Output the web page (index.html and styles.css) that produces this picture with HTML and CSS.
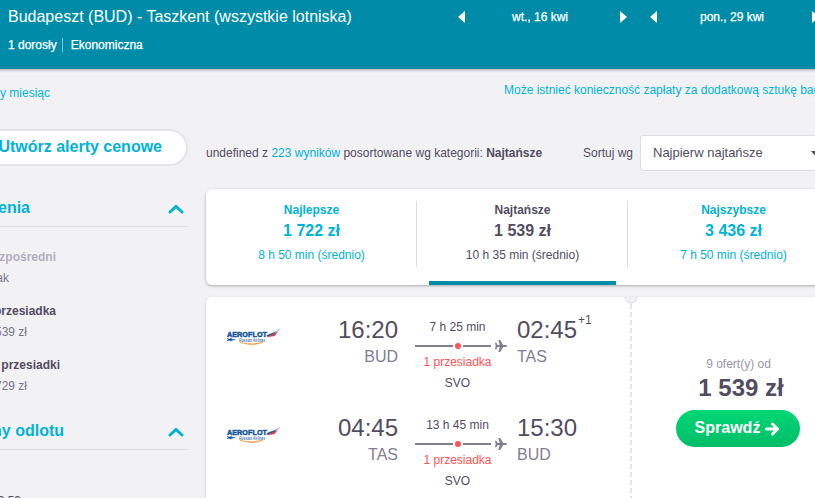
FILE: index.html
```html
<!DOCTYPE html>
<html lang="pl">
<head>
<meta charset="utf-8">
<title>Budapeszt – Taszkent</title>
<link rel="stylesheet" href="styles.css">
</head>
<body>
<svg width="0" height="0" class="defs">
  <symbol id="plane" viewBox="0 0 12 12"><path d="M0 2.800h1.300l1.300 2.200h2.200L3.300 0h1.900l3 5h2.600q1.200.2 1.200 1t-1.200 1H8.200l-3 5H3.300l1.500-5H2.600L1.300 9.200H0L.7 6z"/></symbol>
  <symbol id="logo" viewBox="0 0 56 18">
    <text x="1" y="9" class="logo-name" textLength="40" lengthAdjust="spacingAndGlyphs">AEROFLOT</text>
    <text x="13" y="13.500" class="logo-sub" textLength="26" lengthAdjust="spacingAndGlyphs">Russian Airlines</text>
    <path d="M1 10.500l3 .5 1-.9.8 1 3.700.6-3.700.6-.8 1-1-.9-3 .1 1.400-1z" fill="#17569b" stroke="#17569b" stroke-width=".4"/>
    <path d="M14 14.200q11 3.400 23-.2-10 5-23 .2z" fill="#f39a42" stroke="#f39a42" stroke-width=".6"/>
    <path d="M39 8.500q4-3.500 9-4.300L55 .5q-2 3-6 4.200L42 8z" fill="#9aa9bd"/>
    <path d="M41 7.300l9-3.600-2 2.600-7 2.500z" fill="#244f91"/>
    <path d="M42 8.200l10-4.500-3.300 4.300-7.700 1.200z" fill="#cf4450"/>
  </symbol>
</svg>
<header class="header">
  <div class="trip">
    <div class="trip-title">Budapeszt (BUD) - Taszkent (wszystkie lotniska)</div>
    <div class="trip-sub"><span>1 dorosły</span><i></i><span>Ekonomiczna</span></div>
  </div>
  <nav class="dates">
    <div class="date"><svg width="7" height="12"><path d="M7 0v12L0 6z"/></svg><span>wt., 16 kwi</span><svg width="7" height="12"><path d="M0 0v12l7-6z"/></svg></div>
    <div class="date"><svg width="7" height="12"><path d="M7 0v12L0 6z"/></svg><span>pon., 29 kwi</span><svg width="7" height="12"><path d="M0 0v12l7-6z"/></svg></div>
  </nav>
</header>
<div class="page">
  <aside class="side">
    <div class="tail month">y miesiąc</div>
    <div class="alert">Utwórz alerty cenowe</div>
    <div class="group"><div class="tail w-enia">enia</div><svg width="16" height="10"><path d="M2 8l6-5.500L14 8"/></svg></div>
    <div class="tail strong muted r1">zpośredni</div>
    <div class="tail price r2">ak</div>
    <div class="tail strong r3">przesiadka</div>
    <div class="tail price r4">539 zł</div>
    <div class="tail strong r5">przesiadki</div>
    <div class="tail price r6">729 zł</div>
    <div class="group second"><div class="tail w-odlotu">ny odlotu</div><svg width="16" height="10"><path d="M2 8l6-5.500L14 8"/></svg></div>
    <div class="tail time-range">3:59</div>
  </aside>
  <main class="main">
    <div class="notice">Może istnieć konieczność zapłaty za dodatkową sztukę bagażu</div>
    <div class="sortbar">
      <div class="count">undefined z <em>223 wyników</em> posortowane wg kategorii: <b>Najtańsze</b></div>
      <div class="sort-label">Sortuj wg</div>
      <div class="select"><span>Najpierw najtańsze</span><svg width="8" height="5"><path d="M0 0h8L4 4.500z"/></svg></div>
    </div>
    <div class="tabs">
      <div class="tab"><b>Najlepsze</b><strong>1 722 zł</strong><span>8 h 50 min (średnio)</span></div>
      <div class="tab active"><b>Najtańsze</b><strong>1 539 zł</strong><span>10 h 35 min (średnio)</span></div>
      <div class="tab"><b>Najszybsze</b><strong>3 436 zł</strong><span>7 h 50 min (średnio)</span></div>
    </div>
    <div class="ticket">
      <div class="legs">
        <div class="leg">
          <svg class="logo" width="56" height="18"><use href="#logo"/></svg>
          <div class="stop from"><div class="time">16:20</div><div class="code">BUD</div></div>
          <div class="route"><div class="dur">7 h 25 min</div><div class="track"><i class="a"></i><i class="dot"></i><i class="b"></i><svg width="12" height="12"><use href="#plane"/></svg></div><div class="change">1 przesiadka</div><div class="via">SVO</div></div>
          <div class="stop"><div class="time">02:45<sup>+1</sup></div><div class="code">TAS</div></div>
        </div>
        <div class="leg">
          <svg class="logo" width="56" height="18"><use href="#logo"/></svg>
          <div class="stop from"><div class="time">04:45</div><div class="code">TAS</div></div>
          <div class="route"><div class="dur">13 h 45 min</div><div class="track"><i class="a"></i><i class="dot"></i><i class="b"></i><svg width="12" height="12"><use href="#plane"/></svg></div><div class="change">1 przesiadka</div><div class="via">SVO</div></div>
          <div class="stop"><div class="time">15:30</div><div class="code">BUD</div></div>
        </div>
      </div>
      <svg class="perf" width="14" height="201"><path class="notch" d="M1 0a6 6 0 0 0 12 0"/><path class="dash" d="M7 7V201"/></svg>
      <div class="offer">
        <div class="offers">9 ofert(y) od</div>
        <div class="total">1 539 zł</div>
        <div class="btn">Sprawdź<svg width="15" height="14"><path d="M1.500 7h11M7.500 2l5 5-5 5"/></svg></div>
      </div>
    </div>
  </main>
</div>
</body>
</html>
```
FILE: styles.css
```css
* { box-sizing: border-box; }
html { overflow: hidden; }
body { margin: 0; width: 815px; height: 498px; overflow: hidden; background: #f2f2f5; color: #524c61; font: 12px/16px "Liberation Sans", Arial, sans-serif; white-space: nowrap; }
.defs { display: block; }
svg { flex: none; }
.header { position: relative; display: flex; width: 830px; height: 69px; margin-left: -6px; padding-left: 6px; background: #008ca8; color: #fff; box-shadow: 0 1px 3px rgba(0,0,0,.3); }
.trip { width: 458px; flex: none; padding: 7px 0 0 8px; }
.trip-title { font-size: 16px; line-height: 20px; }
.trip-sub { display: flex; align-items: center; margin-top: 10px; -webkit-text-stroke: .25px #fff; }
.trip-sub i { width: 1px; height: 14px; margin: 0 8px 0 5px; background: #80c6d4; }
.dates { display: flex; gap: 23px; padding-top: 9px; }
.date { display: flex; flex: none; width: 169px; height: 16px; align-items: center; justify-content: space-between; fill: #fff; -webkit-text-stroke: .25px #fff; }
.date span { margin-right: 5px; }
.page { display: flex; height: 429px; overflow: hidden; }
.side { width: 188px; flex: none; }
.tail { display: flex; justify-content: flex-end; overflow: hidden; }
.month { width: 50px; margin-top: 16px; color: #00b2d6; }
.alert { display: flex; justify-content: flex-end; width: 188px; height: 37px; margin-top: 28px; padding-right: 24px; border: 2px solid #e3e3ea; border-left: 0; border-radius: 0 19px 19px 0; background: #fff; color: #00b2d6; font-weight: bold; font-size: 16px; line-height: 31px; }
.group { display: flex; height: 37px; margin-top: 24px; padding: 7px 4px 0 0; justify-content: space-between; border-bottom: 1px solid #dddde5; color: #00b2d6; font-weight: bold; font-size: 16px; line-height: 22px; }
.group svg { margin-top: 7px; fill: none; stroke: #00b2d6; stroke-width: 3; stroke-linecap: round; }
.w-enia { width: 30px; }
.w-odlotu { width: 64px; }
.strong { font-weight: bold; }
.muted { color: #b2aebd; }
.price { color: #77748a; }
.r1 { width: 56px; margin-top: 22px; }
.r2 { width: 9px; margin-top: 5px; }
.r3 { width: 56px; margin-top: 17px; }
.r4 { width: 27px; margin-top: 5px; }
.r5 { width: 60px; margin-top: 17px; }
.r6 { width: 27px; margin-top: 5px; }
.second { margin-top: 19px; }
.time-range { width: 21px; margin-top: 43px; }
.main { width: 634px; flex: none; margin-left: 18px; }
.notice { margin: 13px 0 0 298px; color: #00b2d6; }
.sortbar { display: flex; align-items: center; height: 36px; margin-top: 37px; }
.count { width: 377px; }
.count em { color: #00b2d6; font-style: normal; }
.sort-label { width: 57px; }
.select { display: flex; width: 186px; height: 36px; padding: 0 6px 0 12px; align-items: center; border: 1px solid #dddde5; border-radius: 3px; background: #fff; font-size: 13px; }
.select svg { margin-left: 48px; fill: #524c61; }
.tabs { display: flex; height: 96px; margin-top: 18px; border-radius: 6px; background: #fff; box-shadow: 0 1px 3px rgba(0,0,0,.3); }
.tab { display: grid; grid-template-rows: 16px 22px 16px; width: 211px; padding-top: 13px; justify-items: center; background: linear-gradient(#dddde5, #dddde5) 100% 12px / 1px 66px no-repeat; color: #00b2d6; }
.tab:last-child { background: none; }
.tab strong { padding-top: 2px; font-size: 16px; line-height: 22px; }
.tab > span { padding-top: 7px; }
.tab.active { grid-template-rows: 16px 22px 41px 4px; color: #524c61; }
.tab.active::after { content: ""; width: 187px; height: 4px; background: #008ca8; }
.ticket { display: flex; height: 260px; margin-top: 12px; border-radius: 6px; background: #fff; box-shadow: 0 1px 3px rgba(0,0,0,.2); }
.legs { width: 418px; padding-top: 20px; }
.leg { display: flex; height: 98px; padding-left: 20px; }
.logo { margin-top: 11px; }
.logo-name { font: bold 7.5px "Liberation Sans", sans-serif; fill: #17569b; stroke: #17569b; stroke-width: .5px; }
.logo-sub { font: italic bold 4.5px "Liberation Sans", sans-serif; fill: #4b7bae; }
.stop.from { width: 116px; text-align: right; }
.time { display: flex; justify-content: flex-start; height: 26px; font-size: 24px; line-height: 26px; }
.from .time { justify-content: flex-end; }
.time sup { font-size: 12px; line-height: 12px; margin: -3px 0 0 1px; }
.code { height: 26px; color: #817d92; font-size: 16px; line-height: 27px; }
.route { width: 119px; padding: 2px 0 0 17px; }
.dur, .change, .via { width: 85px; text-align: center; }
.track { display: flex; align-items: center; width: 92px; height: 12px; margin: 5px 0 2px; fill: #817d92; }
.track .a { width: 38px; height: 2px; background: #817d92; }
.track .dot { width: 6px; height: 6px; margin: 0 2px; border-radius: 50%; background: #ff5452; }
.track .b { width: 28px; height: 2px; background: #817d92; }
.track svg { margin-left: 4px; }
.change { color: #ff5452; }
.via { margin-top: 5px; }
.perf .notch { fill: #f2f2f5; stroke: #d9d9df; stroke-width: 1; }
.perf .dash { stroke: #e3e3ea; stroke-width: 2; stroke-dasharray: 5 3; }
.offer { display: flex; flex-direction: column; align-items: center; width: 202px; padding: 59px 3px 0 0; }
.offers { color: #9a96a8; margin-left: 2px; }
.total { margin: 3px 0 0 7px; font-size: 24px; font-weight: bold; line-height: 26px; }
.btn { display: flex; align-items: center; justify-content: center; width: 124px; height: 37px; margin-top: 9px; padding-bottom: 2px; border-radius: 19px; background: linear-gradient(#00d775, #00bd68); color: #fff; font-size: 16px; font-weight: bold; }
.btn svg { margin: 2px 0 0 5px; fill: none; stroke: #fff; stroke-width: 3; stroke-linecap: round; stroke-linejoin: round; }
```
